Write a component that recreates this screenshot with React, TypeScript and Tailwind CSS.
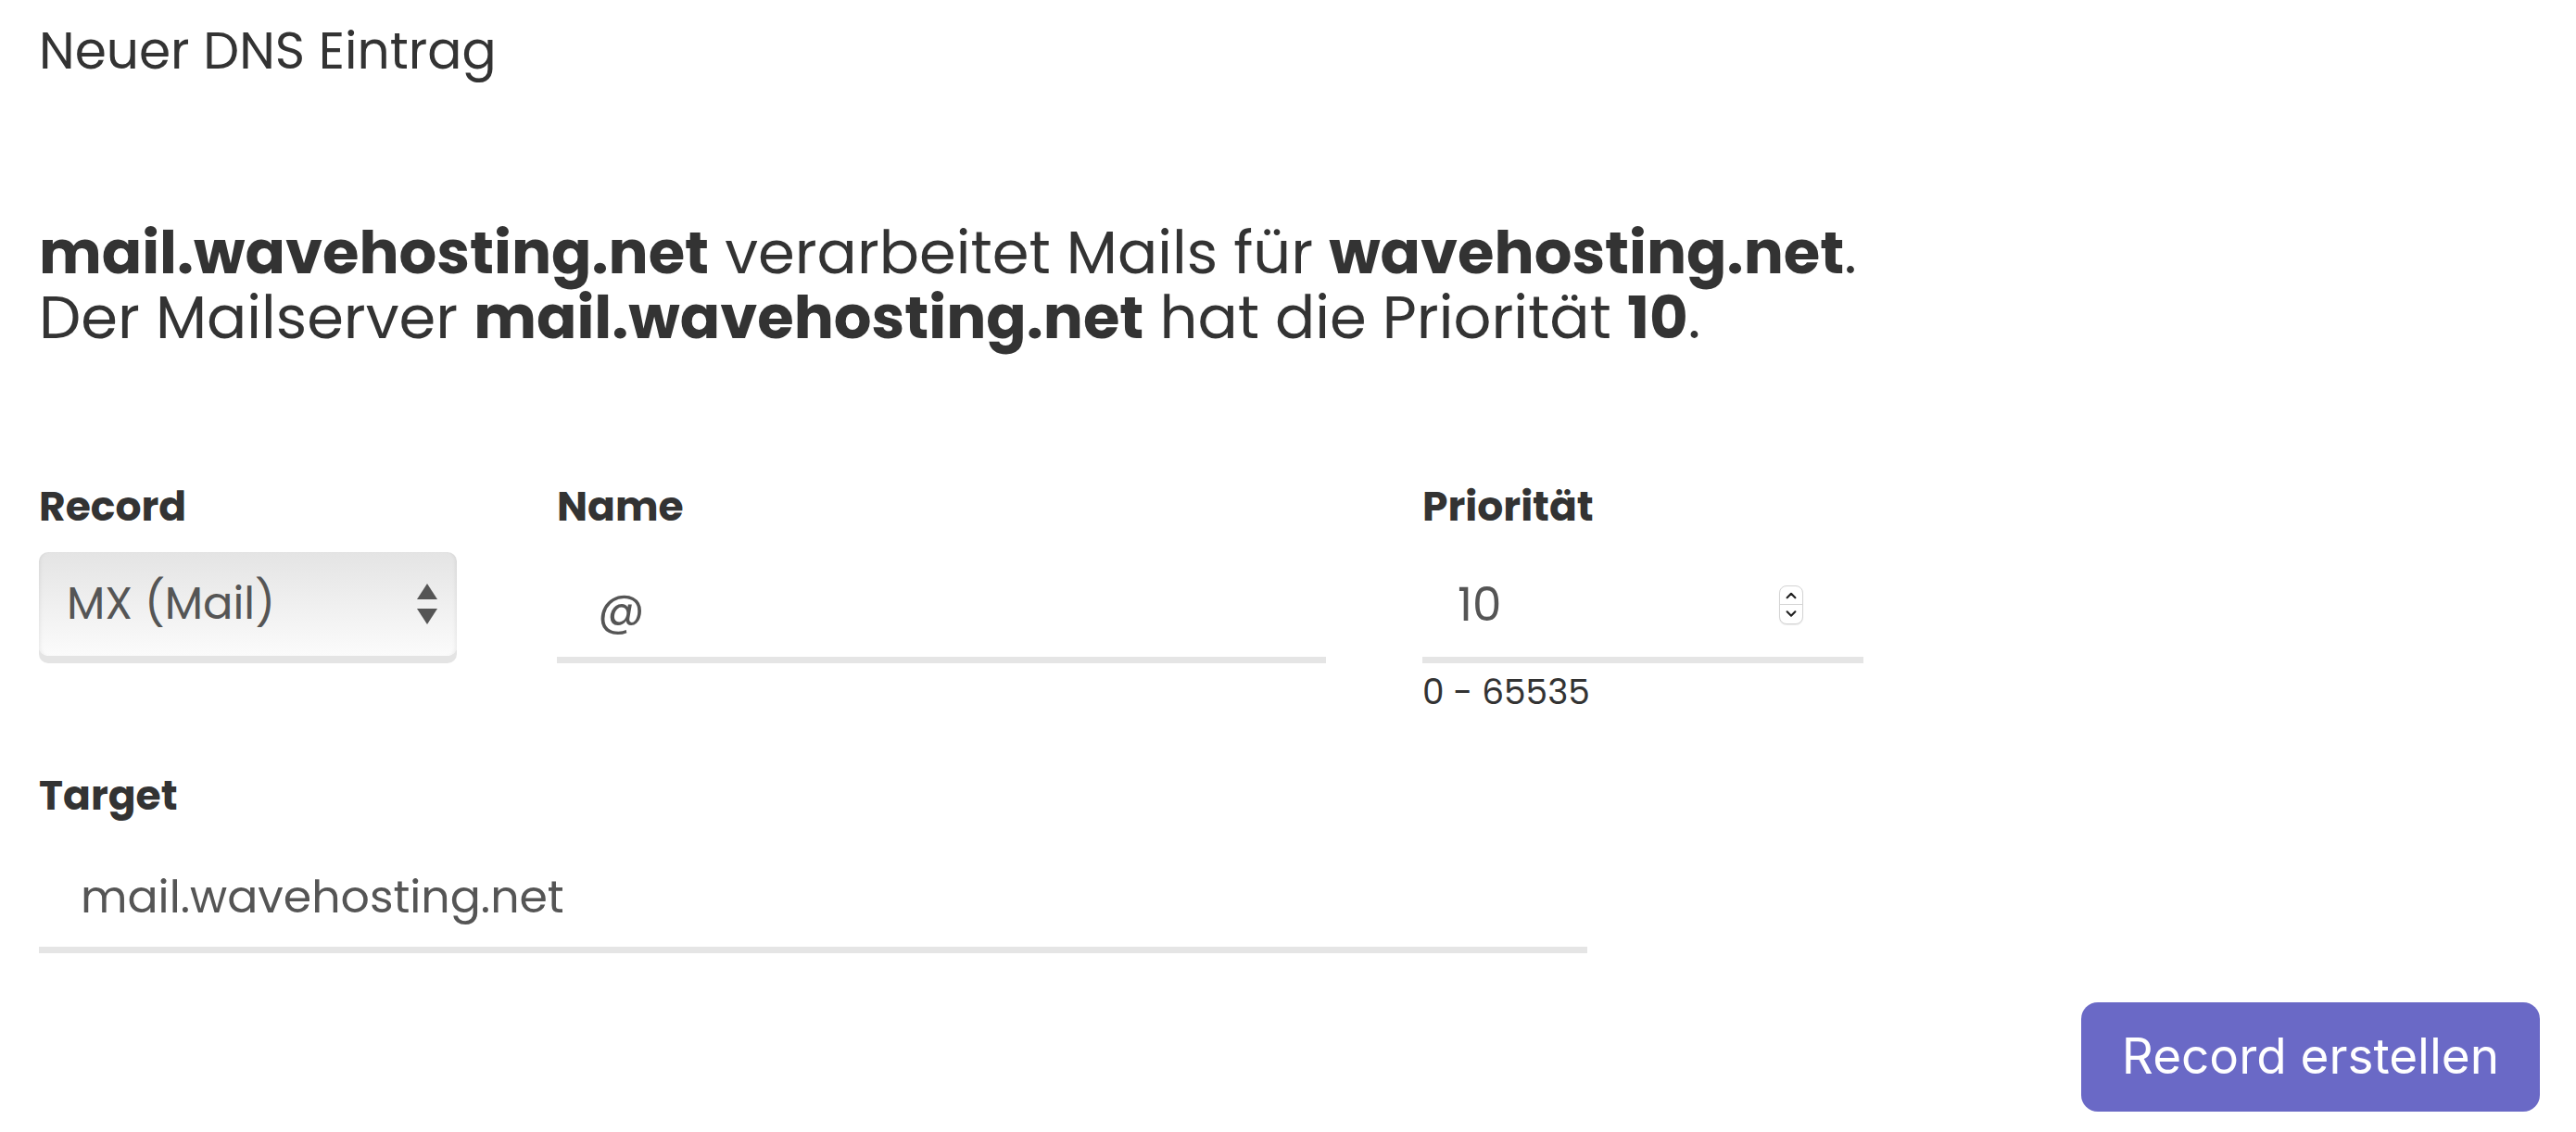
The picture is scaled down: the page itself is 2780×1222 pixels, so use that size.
import { useState } from "react";

const font = "font-['Poppins','Inter',sans-serif]";

function Label({ children }: { children: React.ReactNode }) {
    return <div className="text-[44px] leading-[52px] font-bold text-[#333]">{children}</div>;
}

function Spinner() {
    return (
        <span className="flex flex-col items-center w-[26px] h-[42px] rounded-[8px] border border-[#d4d4d4] bg-white shadow-[0_1px_1px_rgba(0,0,0,0.08)] overflow-hidden">
            <svg viewBox="0 0 26 20" className="w-[26px] h-[20px]">
                <path d="M8.5 12.5 L13 8 L17.5 12.5" fill="none" stroke="#222" strokeWidth="2.2" strokeLinecap="round" strokeLinejoin="round" />
            </svg>
            <span className="w-full h-px bg-[#d4d4d4]" />
            <svg viewBox="0 0 26 20" className="w-[26px] h-[20px]">
                <path d="M8.5 7.5 L13 12 L17.5 7.5" fill="none" stroke="#222" strokeWidth="2.2" strokeLinecap="round" strokeLinejoin="round" />
            </svg>
        </span>
    );
}

export default function App() {
    const [name, setName] = useState("@");
    const [prio, setPrio] = useState("10");
    const [target, setTarget] = useState("mail.wavehosting.net");

    return (
        <div className={`${font} min-h-screen bg-white pl-[42px] pr-[39px] pt-[15px] text-[#333]`}>
            {/* Heading */}
            <h1 className="text-[55px] leading-[80px] font-normal">Neuer DNS Eintrag</h1>

            {/* Summary */}
            <div className="mt-[143px] text-[64px] leading-[70px] font-normal">
                <div>
                    <b className="font-bold">mail.wavehosting.net</b> verarbeitet Mails für <b className="font-bold">wavehosting.net</b>.
                </div>
                <div>
                    Der Mailserver <b className="font-bold">mail.wavehosting.net</b> hat die Priorität <b className="font-bold">10</b>.
                </div>
            </div>

            {/* Record / Name / Priorität */}
            <div className="mt-[143px] flex items-start">
                <div className="w-[451px]">
                    <Label>Record</Label>
                    <div className="mt-[23px] h-[112px] flex items-center justify-between pl-[30px] pr-[21px] rounded-[10px] bg-gradient-to-b from-[#e4e4e4] to-[#fbfbfb] shadow-[0_8px_0_#e4e4e4,inset_4px_0_4px_-3px_rgba(0,0,0,0.08),inset_-4px_0_4px_-3px_rgba(0,0,0,0.08)]">
                        <span className="text-[48px] text-[#555]">MX (Mail)</span>
                        <svg viewBox="0 0 22 44" className="w-[22px] h-[44px]">
                            <path d="M11 0 L22 17 L0 17 Z" fill="#555" />
                            <path d="M0 27 L22 27 L11 44 Z" fill="#555" />
                        </svg>
                    </div>
                </div>

                <div className="ml-[108px] w-[830px]">
                    <Label>Name</Label>
                    <div className="mt-[23px] h-[120px] border-b-[7px] border-[#e5e5e5] flex items-center">
                        <input
                            value={name}
                            onChange={(e) => setName(e.target.value)}
                            className="w-full pl-[44px] pt-[10px] text-[50px] text-[#555] bg-transparent outline-none"
                        />
                    </div>
                </div>

                <div className="ml-[104px] w-[476px]">
                    <Label>Priorität</Label>
                    <div className="mt-[23px] h-[120px] border-b-[7px] border-[#e5e5e5] flex items-center pr-[65px]">
                        <input
                            value={prio}
                            onChange={(e) => setPrio(e.target.value)}
                            className="flex-1 min-w-0 pl-[38px] text-[50px] text-[#555] bg-transparent outline-none"
                        />
                        <Spinner />
                    </div>
                    <div className="mt-[7px] text-[37.5px] leading-[48px] text-[#333]">0 - 65535</div>
                </div>
            </div>

            {/* Target */}
            <div className="mt-[62px] w-[1671px]">
                <Label>Target</Label>
                <div className="mt-[24px] h-[120px] border-b-[7px] border-[#e5e5e5] flex items-center">
                    <input
                        value={target}
                        onChange={(e) => setTarget(e.target.value)}
                        className="w-full pl-[45px] pt-[6px] text-[49px] text-[#555] bg-transparent outline-none"
                    />
                </div>
            </div>

            {/* Submit */}
            <div className="mt-[53px] flex justify-end">
                <button className="h-[118px] px-[44px] rounded-[18px] bg-[#6a69c6] text-white text-[53px] font-['Inter',sans-serif] font-normal">
                    Record erstellen
                </button>
            </div>
        </div>
    );
}
